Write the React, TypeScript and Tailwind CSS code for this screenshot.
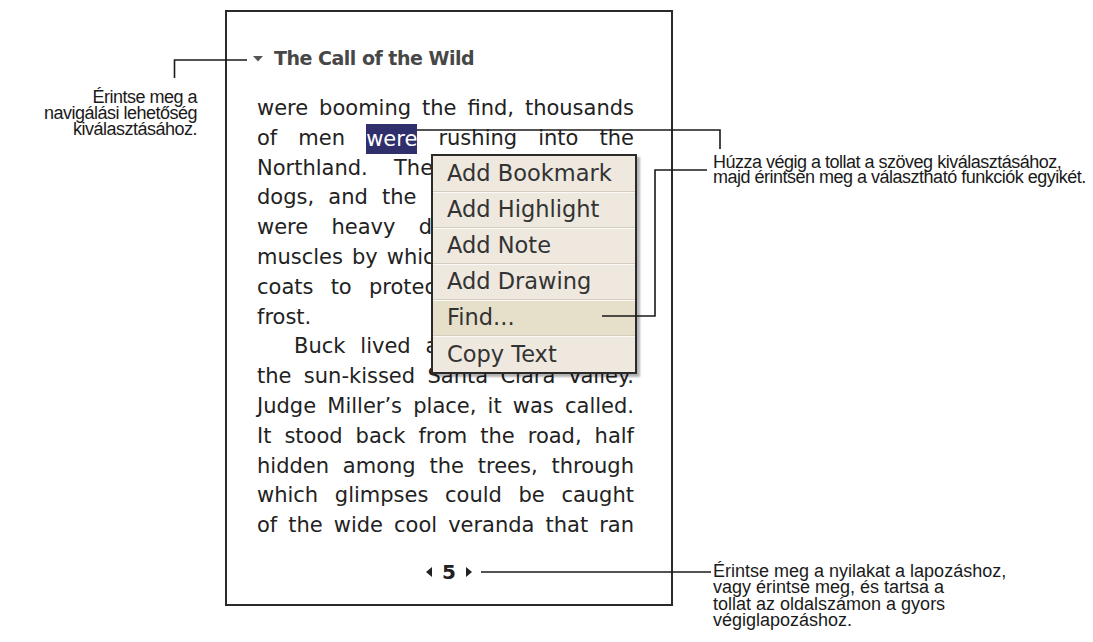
const bodyLines: { text: string; mode: 'justify' | 'left' | 'indent' }[] = [
  { text: 'were booming the find, thousands', mode: 'justify' },
  { text: 'of men @were@ rushing into the', mode: 'justify' },
  { text: 'Northland. These men wanted', mode: 'justify' },
  { text: 'dogs, and the dogs they wanted', mode: 'justify' },
  { text: 'were heavy dogs, with strong', mode: 'justify' },
  { text: 'muscles by which to toil, and furry', mode: 'justify' },
  { text: 'coats to protect them from the', mode: 'justify' },
  { text: 'frost.', mode: 'left' },
  { text: 'Buck lived at a big house in', mode: 'indent' },
  { text: 'the sun-kissed Santa Clara Valley.', mode: 'justify' },
  { text: 'Judge Miller\u2019s place, it was called.', mode: 'justify' },
  { text: 'It stood back from the road, half', mode: 'justify' },
  { text: 'hidden among the trees, through', mode: 'justify' },
  { text: 'which glimpses could be caught', mode: 'justify' },
  { text: 'of the wide cool veranda that ran', mode: 'justify' },
];

const menuItems = ['Add Bookmark', 'Add Highlight', 'Add Note', 'Add Drawing', 'Find...', 'Copy Text'];

function Line({ text, mode }: { text: string; mode: string }) {
  const parts = text.split('@');
  const cls =
    mode === 'left'
      ? 'text-left'
      : mode === 'indent'
        ? 'pl-[37px] text-justify [text-align-last:justify]'
        : 'text-justify [text-align-last:justify]';
  return (
    <div className={`h-[29.8px] ${cls}`}>
      {parts.map((p, i) =>
        i % 2 === 1 ? (
          <span key={i} className="inline-block bg-[#2f2f6b] text-white leading-[30px] h-[30px] align-top">
            {p}
          </span>
        ) : (
          <span key={i}>{p}</span>
        ),
      )}
    </div>
  );
}

export default function App() {
  return (
    <div className="relative w-[1093px] h-[642px] bg-white overflow-hidden flex">
      {/* left callout */}
      <div className="w-[197px] shrink-0 pt-[89px] text-right font-['Liberation_Sans',Arial,sans-serif] text-[18px] leading-[16px] tracking-[-0.5px] text-[#1a1a1a]">
        <p>Érintse meg a</p>
        <p>navigálási lehetőség</p>
        <p>kiválasztásához.</p>
      </div>

      {/* device screen */}
      <div className="relative ml-[28px] mt-[10px] w-[448px] h-[596px] shrink-0 border-2 border-[#2a2a2a] bg-white flex flex-col font-['DejaVu_Sans',Verdana,sans-serif]">
        <div className="mt-[34px] ml-[26px] h-[24px] flex items-center">
          <svg width="10" height="6" viewBox="0 0 10 6" className="mt-[2px]">
            <path d="M0 0 H10 L5 5.5 Z" fill="#555" />
          </svg>
          <span className="ml-[11px] text-[19px] font-bold tracking-[-0.5px] text-[#474747]">The Call of the Wild</span>
        </div>

        <div className="mt-[24px] ml-[30px] w-[377px] text-[21px] leading-[29.8px] text-[#222]">
          {bodyLines.map((l, i) => (
            <Line key={i} text={l.text} mode={l.mode} />
          ))}
        </div>

        <div className="mt-auto mb-[22px] h-[20px] flex items-center justify-center gap-[10px] text-[#222]">
          <svg width="6" height="10" viewBox="0 0 6 10">
            <path d="M6 0 V10 L0 5 Z" fill="#222" />
          </svg>
          <span className="text-[20px] font-bold leading-[20px]">5</span>
          <svg width="6" height="10" viewBox="0 0 6 10">
            <path d="M0 0 V10 L6 5 Z" fill="#222" />
          </svg>
        </div>

        {/* popup menu */}
        <div className="absolute left-[204px] top-[142px] w-[206px] border-2 border-[#2a2a2a] bg-[#eee8de] shadow-[3px_3px_2px_rgba(0,0,0,0.3)]">
          {menuItems.map((m, i) => (
            <div
              key={m}
              className={`h-[36px] flex items-center pl-[14px] text-[22.5px] text-[#333] ${
                i > 0 ? 'border-t border-t-[#fbfaf6]' : ''
              } ${i < menuItems.length - 1 ? 'border-b border-b-[#d3ccbf]' : ''} ${
                m === 'Find...' ? 'bg-[#e6dfca]' : ''
              }`}
            >
              {m}
            </div>
          ))}
        </div>
      </div>

      {/* right callouts */}
      <div className="ml-[40px] pt-[155px] font-['Liberation_Sans',Arial,sans-serif] text-[18px] text-[#1a1a1a] whitespace-nowrap">
        <div className="leading-[14.5px] tracking-[-0.5px]">
          <p>Húzza végig a tollat a szöveg kiválasztásához,</p>
          <p>majd érintsen meg a választható funkciók egyikét.</p>
        </div>
        <div className="mt-[379px] leading-[16.3px]">
          <p>Érintse meg a nyilakat a lapozáshoz,</p>
          <p>vagy érintse meg, és tartsa a</p>
          <p>tollat az oldalszámon a gyors</p>
          <p>végiglapozáshoz.</p>
        </div>
      </div>

      {/* leader lines */}
      <svg className="absolute inset-0 pointer-events-none" width="1093" height="642" viewBox="0 0 1093 642">
        <g fill="none" stroke="#1a1a1a" strokeWidth="1.6">
          <path d="M174.5 78 V60 H247" />
          <path d="M417 130 H720 V149" />
          <path d="M602 316 H655 V170 H707" />
          <path d="M481 572 H711" />
        </g>
      </svg>
    </div>
  );
}
